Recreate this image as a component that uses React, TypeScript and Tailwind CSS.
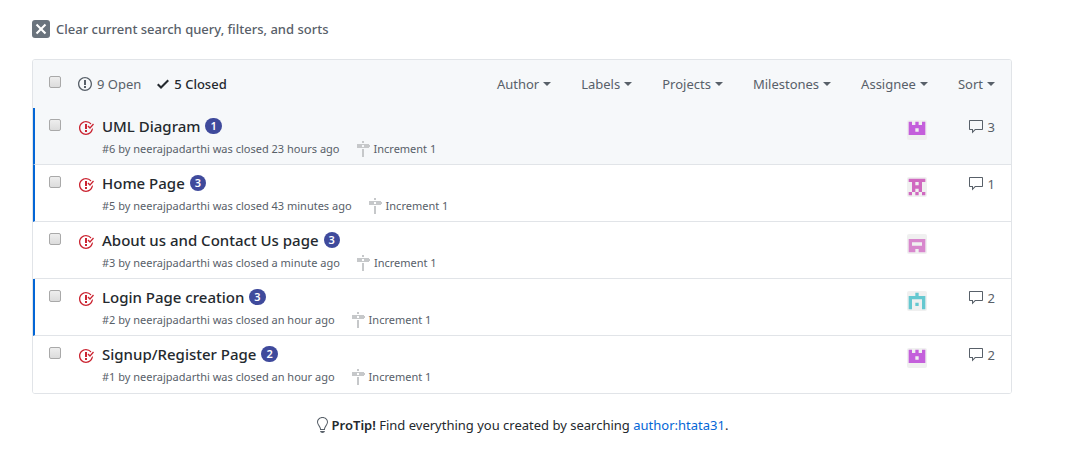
import React from "react";

type IconProps = { d: string; width: number; className?: string };

function Icon({ d, width, className = "" }: IconProps) {
  return (
    <svg aria-hidden="true" viewBox={`0 0 ${width} 16`} className={`shrink-0 fill-current ${className}`}>
      <path fillRule="evenodd" d={d} />
    </svg>
  );
}

const paths = {
  x: "M7.48 8l3.75 3.75-1.48 1.48L6 9.48l-3.75 3.75-1.48-1.48L4.52 8 .77 4.25l1.48-1.48L6 6.52l3.75-3.75 1.48 1.48L7.48 8z",
  opened:
    "M7 2.3c3.14 0 5.7 2.56 5.7 5.7s-2.56 5.7-5.7 5.7A5.71 5.71 0 0 1 1.3 8c0-3.14 2.56-5.7 5.7-5.7zM7 1C3.14 1 0 4.14 0 8s3.14 7 7 7 7-3.14 7-7-3.14-7-7-7zm1 3H6v5h2V4zm0 6H6v2h2v-2z",
  closed:
    "M7 10h2v2H7v-2zm2-6H7v5h2V4zm1.5 1.5l-1 1L12 9l4-4.5-1-1L12 7l-1.5-1.5zM8 13.7A5.71 5.71 0 0 1 2.3 8c0-3.14 2.56-5.7 5.7-5.7 1.83 0 3.45.88 4.5 2.2l.92-.92A6.947 6.947 0 0 0 8 1C4.14 1 1 4.14 1 8s3.14 7 7 7 7-3.14 7-7l-1.52 1.52c-.66 2.41-2.86 4.19-5.48 4.19v-.01z",
  check: "M12 5l-8 8-4-4 1.5-1.5L4 10l6.5-6.5L12 5z",
  comment:
    "M14 1H2c-.55 0-1 .45-1 1v8c0 .55.45 1 1 1h2v3.5L7.5 11H14c.55 0 1-.45 1-1V2c0-.55-.45-1-1-1zm0 9H7l-2 2v-2H2V2h12v8z",
  milestone:
    "M8 2H6V0h2v2zm4 5H2c-.55 0-1-.45-1-1V4c0-.55.45-1 1-1h10l2 2-2 2zM8 4H6v2h2V4zM6 16h2V8H6v8z",
  bulb: "M6.5 0C3.48 0 1 2.19 1 5c0 .92.55 2.25 1 3 1.34 2.25 1.78 2.78 2 4v1h5v-1c.22-1.22.66-1.75 2-4 .45-.75 1-2.08 1-3 0-2.81-2.48-5-5.5-5zm3.64 7.48c-.25.44-.47.8-.67 1.11-.86 1.41-1.25 2.06-1.45 3.23-.02.05-.02.11-.02.17H5c0-.06 0-.13-.02-.17-.2-1.17-.59-1.83-1.45-3.23-.2-.31-.42-.67-.67-1.11C2.44 6.78 2 5.65 2 5c0-2.2 2.02-4 4.5-4 1.22 0 2.36.42 3.22 1.19C10.55 2.94 11 3.94 11 5c0 .66-.44 1.78-.86 2.48zM4 14h5c-.23 1.14-1.3 2-2.5 2s-2.27-.86-2.5-2z",
};

type Avatar = { color: string; cells: string[] };

const castle: Avatar = { color: "#c45fdb", cells: ["X.X.X", "XXXXX", "XX.XX", "XXXXX", "....."] };
const walker: Avatar = { color: "#d069c0", cells: ["XXXXX", ".X.X.", ".XXX.", ".X.X.", "X.X.X"] };
const gate: Avatar = { color: "#d887cd", cells: [".....", "XXXXX", "X...X", "XXXXX", "XX.XX"] };
const arch: Avatar = { color: "#65c8d0", cells: ["..X..", "XXXXX", "X...X", "X.X.X", "X...X"] };

type Issue = {
  id: number;
  title: string;
  badge: number;
  when: string;
  avatar: Avatar;
  comments?: number;
  unread?: boolean;
  focused?: boolean;
};

const issues: Issue[] = [
  { id: 6, title: "UML Diagram", badge: 1, when: "23 hours ago", avatar: castle, comments: 3, unread: true, focused: true },
  { id: 5, title: "Home Page", badge: 3, when: "43 minutes ago", avatar: walker, comments: 1, unread: true },
  { id: 3, title: "About us and Contact Us page", badge: 3, when: "a minute ago", avatar: gate },
  { id: 2, title: "Login Page creation", badge: 3, when: "an hour ago", avatar: arch, comments: 2, unread: true },
  { id: 1, title: "Signup/Register Page", badge: 2, when: "an hour ago", avatar: castle, comments: 2 },
];

const filters = ["Author", "Labels", "Projects", "Milestones", "Assignee", "Sort"];

function Checkbox({ label }: { label: string }) {
  return (
    <input
      type="checkbox"
      aria-label={label}
      className="block size-3 shrink-0 appearance-none rounded-[2px] border border-[#a9a9a9] bg-linear-to-b from-[#eeeeee] to-[#dcdcdc] checked:bg-[#0366d6]"
    />
  );
}

function Identicon({ avatar }: { avatar: Avatar }) {
  // One path for all cells, so neighbouring cells join without seams.
  const outline = avatar.cells
    .flatMap((row, y) =>
      [...row].map((cell, x) => (cell === "X" ? `M${5 + x * 10} ${5 + y * 10}h10v10h-10z` : "")),
    )
    .join("");
  return (
    <svg viewBox="0 0 60 60" role="img" aria-label="Assignee" className="size-5 rounded-[2px] bg-[#f0f0f0]">
      <path d={outline} fill={avatar.color} />
    </svg>
  );
}

function IssueRow({ issue }: { issue: Issue }) {
  return (
    <li
      className={`flex border-b border-l-2 border-b-[#e1e4e8] pr-4 pl-3.5 last:border-b-white ${
        issue.unread ? "border-l-[#0366d6]" : "border-l-transparent"
      } ${issue.focused ? "bg-[#f6f8fa]" : "bg-white"}`}
    >
      <div className="pt-[11px]">
        <Checkbox label={`Select ${issue.title}`} />
      </div>
      <Icon d={paths.closed} width={16} className="mt-3 ml-[17px] size-4 text-[#cb2431]" />
      <div className="ml-2 min-w-0 flex-1 pt-2 pb-[7px]">
        <div className="flex items-center gap-[5px]">
          <a href={`#issue-${issue.id}`} className="text-[15px] leading-5 font-medium text-[#24292e]">
            {issue.title}
          </a>
          <span className="rounded-lg bg-[#3f4a9c] px-[5px] text-[11px] leading-4 font-semibold text-white">
            {issue.badge}
          </span>
        </div>
        <div className="mt-1 flex flex-wrap items-center text-[11px] leading-[17px] text-[#586069]">
          <span>
            #{issue.id} by <a href="#neerajpadarthi">neerajpadarthi</a> was closed {issue.when}
          </span>
          <a href="#increment-1" className="ml-4 flex items-center gap-1">
            <Icon d={paths.milestone} width={14} className="h-4 w-3.5 text-[#c6c8ca] [shape-rendering:crispEdges]" />
            Increment 1
          </a>
        </div>
      </div>
      <div className="w-5 shrink-0 pt-3">
        <Identicon avatar={issue.avatar} />
      </div>
      <div className="w-[68px] shrink-0 pt-[9px]">
        {issue.comments !== undefined && (
          <a
            href={`#comments-${issue.id}`}
            className="flex items-center justify-end gap-1 text-[13px] leading-5 text-[#586069]"
          >
            <Icon d={paths.comment} width={16} className="size-4" />
            {issue.comments}
          </a>
        )}
      </div>
    </li>
  );
}

export default function App() {
  return (
    <main className="max-w-[1044px] px-8 pt-[19px] font-['Noto_Sans',sans-serif] text-[13px] leading-5 text-[#24292e]">
      <a href="#clear" className="flex items-center gap-1.5 font-medium text-[#586069]">
        <span className="flex size-[18px] items-center justify-center rounded-[3px] bg-[#6a737d] text-white">
          <Icon d={paths.x} width={12} className="h-4 w-3" />
        </span>
        Clear current search query, filters, and sorts
      </a>

      <section className="mt-5 overflow-hidden rounded-[3px] border border-[#e1e4e8]">
        <header className="flex items-center bg-[#f6f8fa] px-4 py-3.5 text-[#586069]">
          <div className="pb-1">
            <Checkbox label="Select all issues" />
          </div>
          <a href="#open" className="ml-[17px] flex items-center gap-[5px]">
            <Icon d={paths.opened} width={14} className="h-4 w-3.5" />9 Open
          </a>
          <a href="#closed" className="ml-4 flex items-center gap-[5px] font-medium text-[#24292e]">
            <Icon d={paths.check} width={12} className="h-4 w-3" />5 Closed
          </a>
          <nav className="ml-auto flex gap-[30px]">
            {filters.map((f) => (
              <button key={f} type="button" className="flex items-center gap-1">
                {f}
                <span className="border-x-4 border-t-4 border-x-transparent border-t-current" />
              </button>
            ))}
          </nav>
        </header>
        <ul>
          {issues.map((issue) => (
            <IssueRow key={issue.id} issue={issue} />
          ))}
        </ul>
      </section>

      <p className="mt-[21px] flex items-center justify-center">
        <Icon d={paths.bulb} width={12} className="mr-1 h-4 w-3 text-[#586069]" />
        <span>
          <strong className="font-semibold">ProTip!</strong> Find everything you created by searching{" "}
          <a href="#author" className="text-[#0366d6]">
            author:htata31
          </a>
          .
        </span>
      </p>
    </main>
  );
}
